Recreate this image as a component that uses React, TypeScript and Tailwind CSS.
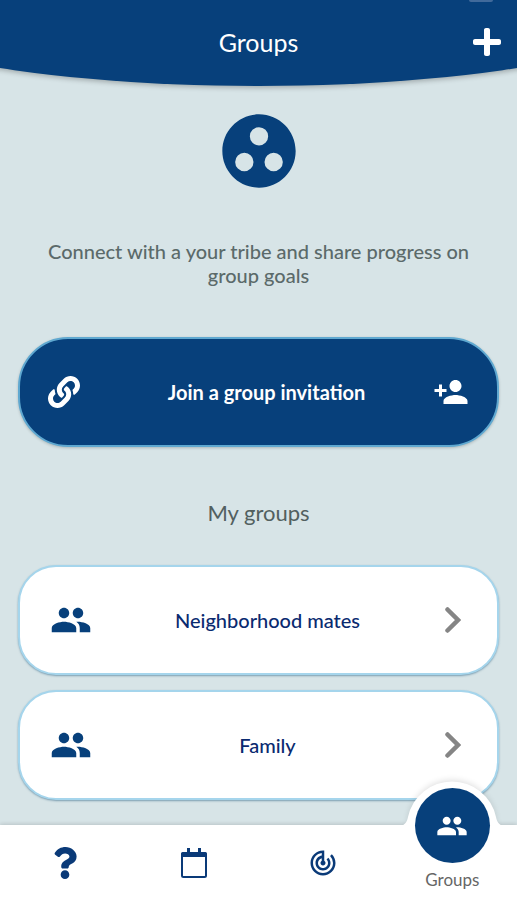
import { FaLink, FaPlus, FaQuestion } from "react-icons/fa";
import { MdGroup, MdGroupWork, MdPersonAdd, MdTrackChanges } from "react-icons/md";

const groups = [
  { id: 1, name: "Neighborhood mates" },
  { id: 2, name: "Family" },
];

const Chevron = () => (
  <svg viewBox="0 0 16 26" className="h-[26px] w-4" fill="none" aria-hidden="true">
    <path d="M2.5 2.5 L13 13 L2.5 23.5" stroke="#858585" strokeWidth="4.5" strokeLinecap="round" />
  </svg>
);

const Calendar = () => (
  <svg viewBox="0 0 28 32" className="h-8 w-7" aria-hidden="true">
    <path d="M7 1 h3 v5 H7 Z M18 1 h3 v5 h-3 Z M3 5 h22 a2 2 0 0 1 2 2 v3 H1 V7 a2 2 0 0 1 2 -2 Z" fill="currentColor" />
    <rect x="2" y="6" width="24" height="24" rx="1.5" fill="none" stroke="currentColor" strokeWidth="2" />
  </svg>
);

const tabs = [
  { id: "help", label: "Help", icon: <FaQuestion className="size-8" /> },
  { id: "calendar", label: "Calendar", icon: <Calendar /> },
  { id: "track", label: "Track", icon: <MdTrackChanges className="size-[30px]" /> },
];

const Header = () => (
  <header className="relative h-[86px]">
    {/* Curved background */}
    <div className="absolute -inset-x-[35%] -top-10 bottom-0 bg-[#07407b] shadow-[0_2px_5px_rgba(0,0,0,0.25)] rounded-[0_0_50%_50%/0_0_94px_94px]" />
    <div className="absolute top-0 right-6 h-0.5 w-6 rounded-b bg-[#416a9b]" />
    <div className="relative grid grid-cols-[1fr_auto_1fr] items-center px-3.5 pt-6 text-white">
      <h1 className="col-start-2 text-[25px] leading-9">Groups</h1>
      <button type="button" aria-label="Add group" className="justify-self-end">
        <FaPlus className="size-8" />
      </button>
    </div>
  </header>
);

const BottomNav = () => (
  <nav className="sticky bottom-0 mt-auto grid h-[75px] grid-cols-4 bg-white text-[#0a3a78] shadow-[0_-1px_4px_rgba(0,0,0,0.15)]">
    {tabs.map((tab) => (
      <button key={tab.id} type="button" aria-label={tab.label} className="flex items-center justify-center">
        {tab.icon}
      </button>
    ))}
    <button type="button" aria-current="page" className="relative flex flex-col items-center justify-end pb-2">
      {/* Raised bump behind the active tab */}
      <svg
        viewBox="0 0 120 106"
        className="absolute -top-[53px] left-1/2 h-[106px] w-[120px] max-w-none -translate-x-1/2"
        aria-hidden="true"
      >
        <defs>
          <filter id="bump" x="-10%" y="-10%" width="120%" height="120%">
            <feGaussianBlur stdDeviation="3" />
          </filter>
          <clipPath id="above">
            <rect width="120" height="53" />
          </clipPath>
        </defs>
        <g clipPath="url(#above)">
          <circle cx="60" cy="52" r="44" fill="#000" opacity="0.12" filter="url(#bump)" />
        </g>
        <path d="M8 54 C13 53 15 50 16 45 A45 45 0 0 1 104 45 C105 50 107 53 112 54 V70 H8 Z" fill="#fff" />
      </svg>
      <span className="absolute -top-[37px] flex size-[75px] items-center justify-center rounded-full bg-[#07407b] text-white">
        <MdGroup className="size-8" />
      </span>
      <span className="relative text-[17px] leading-6 text-[#666]">Groups</span>
    </button>
  </nav>
);

const App = () => {
  return (
    <div className="flex min-h-screen flex-col overflow-x-clip bg-[#d7e4e7] font-['Lato',sans-serif]">
      <Header />

      <main className="flex flex-col px-[18px] pb-6">
        <MdGroupWork className="mt-[21px] size-[88px] self-center text-[#07407b]" />
        <p className="mt-11 px-6 text-center text-xl leading-6 font-medium text-[#5b6a6a]">
          Connect with a your tribe and share progress on group goals
        </p>

        <button
          type="button"
          className="mt-[50px] grid h-[110px] grid-cols-[48px_1fr_32px] items-center rounded-[50px] border-2 border-[#5fa8d0] bg-[#07407b] px-7 text-white shadow-[0_1px_3px_rgba(0,0,0,0.2)]"
        >
          <FaLink className="size-8" />
          <span className="text-xl font-bold">Join a group invitation</span>
          <MdPersonAdd className="size-9 justify-self-end" />
        </button>

        <h2 className="mt-[50px] text-center text-[22px] leading-8 text-[#526060]">My groups</h2>

        <ul className="mt-9 flex flex-col gap-[15px]">
          {groups.map((group) => (
            <li key={group.id}>
              <button
                type="button"
                className="grid h-[110px] w-full grid-cols-[48px_1fr_24px] items-center rounded-[38px] border-2 border-[#a5d5ec] bg-white pr-9 pl-[30px] text-[#0a2a70] shadow-[0_1px_2px_rgba(60,110,140,0.6)]"
              >
                <MdGroup className="size-[42px] text-[#07407b]" />
                <span className="text-xl font-medium">{group.name}</span>
                <span className="justify-self-end">
                  <Chevron />
                </span>
              </button>
            </li>
          ))}
        </ul>
      </main>

      <BottomNav />
    </div>
  );
};

export default App;
